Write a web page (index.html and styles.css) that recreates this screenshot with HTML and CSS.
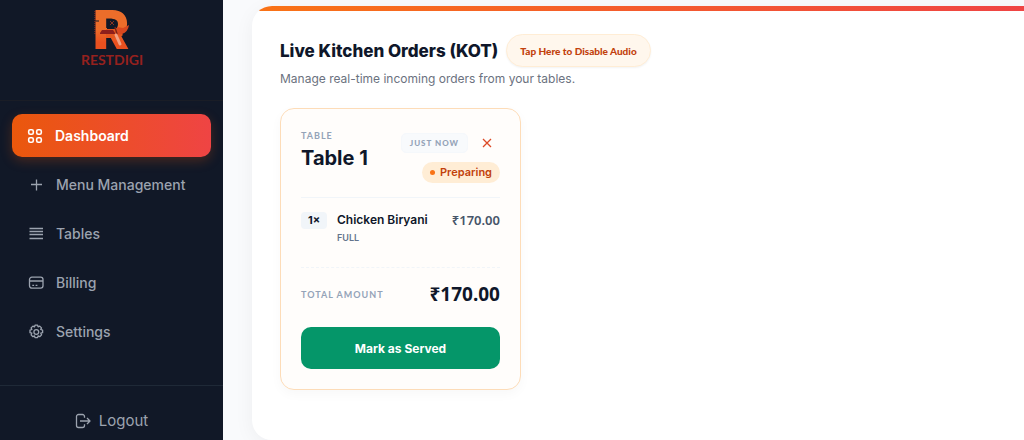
FILE: index.html
```html
<!DOCTYPE html>
<html lang="en">

<head>
    <meta charset="UTF-8">
    <meta name="viewport" content="width=device-width, initial-scale=1.0">
    <title>RestDigi - Live Kitchen Orders</title>
    <link rel="stylesheet" href="styles.css">
</head>

<body>
    <aside class="sidebar">
        <div class="brand">
            <svg class="logo" viewBox="0 0 66 60" role="img" aria-label="RestDigi">
                <defs>
                    <linearGradient id="logo-fill" x1="0" y1="0" x2="0" y2="1">
                        <stop offset="0.5" stop-color="#ec6d2a" />
                        <stop offset="0.7" stop-color="#e9501f" />
                    </linearGradient>
                </defs>
                <text class="logo-letter" x="14" y="42" fill="url(#logo-fill)">R</text>
                <path d="M27 22h12l5 6-4 3H27z" fill="#e4571f" />
                <path d="M28 12h5q6 0 6 5t-4 5h-7z" fill="#111827" />
                <path d="M38 20l6 1 6-3q-1 7-7 9l-5 1z" fill="#d9481f" />
                <path d="M21 26l2-3h11l2 3v1H21z" fill="#8e1f1c" />
                <path d="M31 14l4 4M35 14l-4 4" stroke="#8a3422" />
                <path d="M36 20l2 7" stroke="#7c2418" stroke-width="1.5" />
                <path d="M37 28l4 9" stroke="#f0a184" stroke-width="3" stroke-linecap="round" />
                <path d="M16 14h4" stroke="#111827" />
                <path d="M16 4v24" stroke="#b8321f" stroke-dasharray="1 1" />
                <text class="logo-name" x="33" y="58" text-anchor="middle">RESTDIGI</text>
            </svg>
        </div>

        <nav class="menu">
            <a href="#" class="menu-link active">
                <svg viewBox="0 0 16 16"><rect x="1.7" y="1.7" width="4.6" height="4.6" rx="1.5" /><rect x="9.7" y="1.7" width="4.6" height="4.6" rx="1.5" /><rect x="1.7" y="9.7" width="4.6" height="4.6" rx="1.5" /><rect x="9.7" y="9.7" width="4.6" height="4.6" rx="1.5" /></svg>
                Dashboard
            </a>
            <a href="#" class="menu-link">
                <svg viewBox="0 0 16 16"><path d="M8.5 2.5v11M3 7.5h11" /></svg>
                Menu Management
            </a>
            <a href="#" class="menu-link">
                <svg viewBox="0 0 16 16"><path d="M1.5 2.5H15M1.5 5.5H15M1.5 8.5H15M1.5 12.5H15" /></svg>
                Tables
            </a>
            <a href="#" class="menu-link">
                <svg viewBox="0 0 16 16"><rect x="1.5" y="2.2" width="13.5" height="11" rx="2.4" /><path d="M1.5 6H15M4.3 10.3h1.8M7.6 10.3h1.8" /></svg>
                Billing
            </a>
            <a href="#" class="menu-link">
                <svg viewBox="0 0 16 16"><circle cx="8.3" cy="8" r="2.4" /><path d="M7 1.2h2.6l.5 1.7 1.6-.8 1.8 1.8-.8 1.6 1.9.6v2.6l-1.8.5.8 1.7-1.9 1.8-1.6-.8-.5 1.8H7l-.5-1.8-1.6.8-1.8-1.8.7-1.7-1.8-.5V6.1l1.9-.6-.8-1.6L4.900 2.1l1.6.8z" stroke-linejoin="round" /></svg>
                Settings
            </a>
        </nav>

        <div class="sidebar-footer">
            <a href="#" class="logout">
                <svg viewBox="0 0 16 16"><path d="M9.5 4.8V3.5a2 2 0 0 0-2-2h-4a2 2 0 0 0-2 2v9a2 2 0 0 0 2 2h4a2 2 0 0 0 2-2v-1.300M5 8h10M12 5l3 3-3 3" stroke-linejoin="round" /></svg>
                Logout
            </a>
        </div>
    </aside>

    <main class="content">
        <section class="panel">
            <div class="panel-header">
                <h1>Live Kitchen Orders (KOT)</h1>
                <button type="button" class="audio-btn">Tap Here to Disable Audio</button>
            </div>
            <p class="subtitle">Manage real-time incoming orders from your tables.</p>

            <div class="orders">
                <article class="order-card">
                    <header class="order-header">
                        <div>
                            <span class="label">TABLE</span>
                            <h2>Table 1</h2>
                        </div>
                        <div class="order-meta">
                            <div class="order-time">
                                <span class="time-chip">JUST NOW</span>
                                <button type="button" class="close-btn" aria-label="Cancel order">
                                    <svg viewBox="0 0 10 10"><path d="M1 1l8 8M9 1L1 9" /></svg>
                                </button>
                            </div>
                            <span class="status">Preparing</span>
                        </div>
                    </header>

                    <div class="order-item">
                        <span class="qty">1×</span>
                        <div class="item-info">
                            <span class="item-name">Chicken Biryani</span>
                            <span class="item-size">FULL</span>
                        </div>
                        <span class="item-price">₹170.00</span>
                    </div>

                    <div class="order-total">
                        <span class="label">TOTAL AMOUNT</span>
                        <span class="total-price">₹170.00</span>
                    </div>

                    <button type="button" class="serve-btn">Mark as Served</button>
                </article>
            </div>
        </section>
    </main>
</body>

</html>
```
FILE: styles.css
```css
* {
    box-sizing: border-box;
}

body {
    margin: 0;
    display: flex;
    min-height: 100vh;
    background: #f9fafc;
    color: #0f172a;
    font-family: Inter, "Noto Sans", sans-serif;
    overflow-x: hidden;
}

h1,
h2,
p {
    margin: 0;
}

button {
    font-family: inherit;
    cursor: pointer;
}

svg {
    fill: none;
    stroke: currentColor;
}

/* Sidebar */
.sidebar {
    width: 223px;
    flex-shrink: 0;
    display: flex;
    flex-direction: column;
    background: #111827;
}

.brand {
    height: 101px;
    padding-top: 7px;
    text-align: center;
    border-bottom: 1px solid #1a1d26;
}

.logo {
    width: 66px;
    height: 60px;
    overflow: visible;
    stroke: none;
}

.logo-letter {
    font-size: 54px;
    font-weight: 900;
}

.logo-name {
    font-family: Lato, sans-serif;
    font-size: 14px;
    font-weight: 700;
    fill: #96211e;
}

.menu {
    flex: 1;
    display: flex;
    flex-direction: column;
    gap: 6px;
    padding: 13px 12px;
}

.menu-link {
    display: flex;
    align-items: center;
    gap: 12px;
    height: 43px;
    padding: 0 16px;
    border-radius: 10px;
    color: #9ca3af;
    font-size: 14px;
    font-weight: 500;
    text-decoration: none;
}

.menu-link svg,
.logout svg {
    width: 16px;
    height: 16px;
    stroke-width: 1.3;
}

.menu-link.active {
    padding: 0 15px;
    background: linear-gradient(90deg, #ea580c, #ef4444);
    color: #fff;
    font-weight: 600;
    box-shadow: 0 4px 12px rgba(234, 88, 12, 0.25);
}

.menu-link.active svg {
    stroke-width: 1.6;
}

.sidebar-footer {
    padding: 24px 12px 8px;
    border-top: 1px solid #1f2937;
}

.logout {
    display: flex;
    align-items: center;
    justify-content: center;
    gap: 8px;
    color: #9ca3af;
    font-size: 15px;
    line-height: 22px;
    text-decoration: none;
}

/* Orders panel */
.content {
    flex: 1;
    display: flex;
    padding: 6px 0 0 29px;
}

.panel {
    position: relative;
    flex: 1;
    padding: 28px;
    background: #fff;
    border-radius: 20px 0 0 20px;
    box-shadow: 0 4px 20px rgba(15, 23, 42, 0.05);
    overflow: hidden;
}

.panel::before {
    content: "";
    position: absolute;
    top: 0;
    left: 0;
    right: 0;
    height: 5px;
    background: linear-gradient(90deg, #f97316, #ef4444);
}

.panel-header {
    display: flex;
    align-items: center;
    gap: 8px;
}

h1 {
    font-size: 17px;
    font-weight: 800;
    line-height: 24px;
}

.audio-btn {
    height: 33px;
    padding: 0 13px;
    border: 1px solid #ffedd5;
    border-radius: 17px;
    background: #fff7ed;
    color: #c2410c;
    font-family: Lato, sans-serif;
    font-size: 10px;
    font-weight: 900;
    box-shadow: 0 1px 2px rgba(0, 0, 0, 0.05);
}

.subtitle {
    margin-top: 3px;
    color: #6b7280;
    font-size: 12px;
    line-height: 18px;
}

.orders {
    display: flex;
    flex-wrap: wrap;
    gap: 20px;
    margin-top: 20px;
}

/* Order card */
.order-card {
    width: 241px;
    padding: 20px;
    border: 1px solid #fddcb8;
    border-radius: 14px;
    background: #fffdfb;
    box-shadow: 0 4px 12px rgba(15, 23, 42, 0.03);
}

.order-header {
    display: flex;
    justify-content: space-between;
    padding-bottom: 14px;
    border-bottom: 1px solid #f1f5f9;
}

.label {
    display: block;
    color: #94a3b8;
    font-family: Lato, sans-serif;
    font-size: 9px;
    font-weight: 700;
    line-height: 14px;
    letter-spacing: 1px;
}

h2 {
    font-size: 20px;
    font-weight: 700;
    line-height: 30px;
}

.order-meta {
    display: flex;
    flex-direction: column;
    align-items: flex-end;
    gap: 6px;
}

.order-time {
    display: flex;
    align-items: center;
    gap: 6px;
}

.time-chip {
    padding: 0 8px;
    border: 1px solid #f5f8fb;
    border-radius: 5px;
    background: #f8fafc;
    color: #94a3b8;
    font-family: Lato, sans-serif;
    font-size: 8px;
    font-weight: 900;
    line-height: 18px;
    letter-spacing: 1px;
}

.close-btn {
    display: flex;
    align-items: center;
    justify-content: center;
    width: 26px;
    height: 27px;
    padding: 0;
    border: none;
    background: none;
    color: #dc4a26;
}

.close-btn svg {
    width: 10px;
    height: 10px;
    stroke-width: 1.3;
}

.status {
    display: flex;
    align-items: center;
    gap: 5px;
    padding: 0 8px;
    border-radius: 11px;
    background: #ffedd5;
    color: #c2410c;
    font-size: 11px;
    font-weight: 600;
    line-height: 21px;
}

.status::before {
    content: "";
    width: 5px;
    height: 5px;
    border-radius: 50%;
    background: #f97316;
}

.order-item {
    display: flex;
    align-items: flex-start;
    gap: 10px;
    padding: 13px 0 22px;
    border-bottom: 1px dashed #f1f5f9;
}

.qty {
    width: 26px;
    margin-top: 1px;
    border-radius: 4px;
    background: #f1f5f9;
    font-size: 11px;
    font-weight: 700;
    line-height: 17px;
    text-align: center;
}

.item-info {
    flex: 1;
}

.item-name {
    display: block;
    font-size: 12px;
    font-weight: 600;
    line-height: 18px;
}

.item-size {
    display: block;
    margin-top: 2px;
    color: #64748b;
    font-size: 9px;
    font-weight: 600;
    line-height: 14px;
}

.item-price {
    color: #475569;
    font-family: "Noto Sans", sans-serif;
    font-size: 13px;
    font-weight: 600;
    line-height: 18px;
}

.order-total {
    display: flex;
    align-items: center;
    justify-content: space-between;
    padding: 14px 0 20px;
}

.total-price {
    font-family: "Noto Sans", sans-serif;
    font-size: 19px;
    font-weight: 700;
    line-height: 25px;
}

.serve-btn {
    width: 100%;
    height: 42px;
    border: none;
    border-radius: 10px;
    background: #059669;
    color: #fff;
    font-size: 12px;
    font-weight: 700;
}
```
